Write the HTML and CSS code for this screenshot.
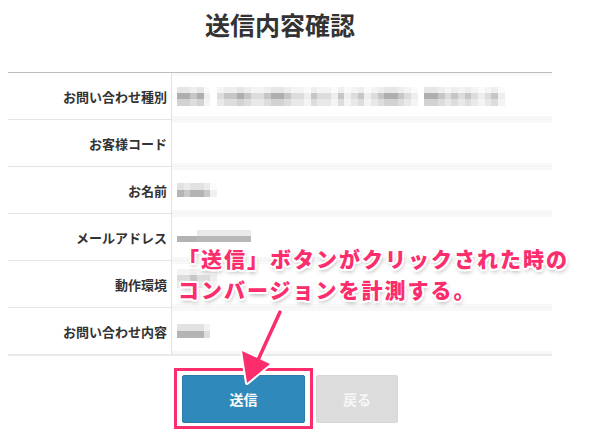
FILE: index.html
```html
<!DOCTYPE html>
<html lang="ja">
<head>
<meta charset="utf-8">
<title>送信内容確認</title>
<link rel="stylesheet" href="styles.css">
</head>
<body>
<div class="page">
  <h1 class="title">送信内容確認</h1>
  <div class="table">
    <div class="label">お問い合わせ種別</div>
    <div class="value">
      <span class="blur">
        <i class="a"></i><i class="a"></i><i class="b"></i><i class="a"></i><i class="d"></i><i class="e"></i>
        <i class="c"></i><i class="b"></i><i class="b"></i><i class="a"></i><i class="b"></i><i class="c"></i>
        <i class="c"></i><i class="b"></i><i class="a"></i><i class="a"></i><i class="b"></i><i class="c"></i>
        <i class="c"></i><i class="d"></i><i class="b"></i><i class="c"></i><i class="c"></i><i class="d"></i>
        <i class="b"></i><i class="d"></i><i class="c"></i><i class="b"></i><i class="d"></i><i class="c"></i>
        <i class="b"></i><i class="a"></i><i class="a"></i><i class="b"></i><i class="c"></i><i class="d"></i>
        <i class="e"></i><i class="a"></i><i class="a"></i><i class="b"></i><i class="c"></i><i class="b"></i>
        <i class="c"></i><i class="b"></i><i class="c"></i><i class="d"></i><i class="c"></i><i class="b"></i>
        <i class="d"></i>
      </span>
    </div>
    <div class="label">お客様コード</div>
    <div class="value"></div>
    <div class="label">お名前</div>
    <div class="value">
      <span class="blur short">
        <i class="a"></i><i class="b"></i><i class="a"></i><i class="a"></i><i class="b"></i><i class="d"></i>
      </span>
    </div>
    <div class="label">メールアドレス</div>
    <div class="value">
      <span class="blur mail">
        <i class="f"></i><i class="f"></i><i class="f"></i><i class="g"></i><i class="g"></i><i class="g"></i>
        <i class="g"></i><i class="g"></i><i class="g"></i><i class="g"></i><i class="g"></i>
      </span>
    </div>
    <div class="label">動作環境</div>
    <div class="value">
      <span class="blur env">
        <i class="c"></i><i class="c"></i><i class="b"></i><i class="c"></i><i class="c"></i><i class="d"></i>
      </span>
    </div>
    <div class="label last">お問い合わせ内容</div>
    <div class="value last">
      <span class="blur short">
        <i class="a"></i><i class="a"></i><i class="a"></i><i class="a"></i><i class="c"></i>
      </span>
    </div>
  </div>

  <div class="actions">
    <div class="highlight">
      <button class="btn btn-send" type="button">送信</button>
    </div>
    <button class="btn btn-back" type="button">戻る</button>
  </div>

  <p class="note">「送信」ボタンがクリックされた時の<br>コンバージョンを計測する。</p>

  <svg class="arrow" viewBox="236 305 56 85" width="56" height="85" aria-hidden="true">
    <path d="M280 312 L258 360" stroke="#ffffff" stroke-width="7" stroke-linecap="round" fill="none"/>
    <path d="M247 383 L242 351 L270 364 Z" fill="#ffffff" stroke="#ffffff" stroke-width="4" stroke-linejoin="round"/>
    <path d="M280 312 L258 360" stroke="#fc2d6d" stroke-width="3.5" stroke-linecap="round" fill="none"/>
    <path d="M247 383 L242 351 L270 364 Z" fill="#fc2d6d"/>
  </svg>
</div>
</body>
</html>
```

FILE: styles.css
```css
* {
  box-sizing: border-box;
}

html, body {
  margin: 0;
  padding: 0;
  background: #ffffff;
}

body {
  font-family: "Noto Sans CJK JP", "Noto Sans", sans-serif;
  color: #333333;
}

.page {
  position: relative;
  width: 544px;
  margin-left: 8px;
  height: 435px;
}

.title {
  margin: 0;
  padding-top: 12px;
  height: 72px;
  font-size: 25px;
  line-height: 25px;
  font-weight: 700;
  text-align: center;
  color: #333333;
  letter-spacing: 0;
}

.table {
  display: grid;
  grid-template-columns: 164px 1fr;
  border-top: 1px solid #bdbdbd;
  border-bottom: 2px solid #e9e9e9;
}

.label {
  height: 47px;
  border-bottom: 1px solid #e4e4e4;
  border-right: 1px solid #e2e2e2;
  padding-right: 4px;
  display: flex;
  align-items: center;
  justify-content: flex-end;
  font-size: 13px;
  font-weight: 700;
  color: #333333;
}

.value {
  height: 47px;
  border-bottom: 1px solid #f4f4f4;
  padding-left: 5px;
  display: flex;
  align-items: center;
  background: linear-gradient(to bottom, #f8f8f8 0 3px, transparent 3px calc(100% - 3px), #f8f8f8 calc(100% - 3px));
}

.label.last,
.value.last {
  height: 46px;
  border-bottom: none;
}

.blur {
  display: flex;
  height: 19px;
}

.blur i {
  display: block;
  width: 6.7px;
  height: 100%;
}

.blur .a { background: linear-gradient(to bottom, #e6e6e6 0 6px, #aeaeae 6px 12px, #d2d2d2 12px); }
.blur .b { background: linear-gradient(to bottom, #eeeeee 0 6px, #c6c6c6 6px 12px, #dddddd 12px); }
.blur .c { background: linear-gradient(to bottom, #f4f4f4 0 6px, #dcdcdc 6px 12px, #e9e9e9 12px); }
.blur .d { background: linear-gradient(to bottom, #fafafa 0 6px, #eeeeee 6px 12px, #f4f4f4 12px); }
.blur .e { background: transparent; }

.blur.short {
  height: 14px;
}

.blur.short .a { background: linear-gradient(to bottom, #e2e2e2 0 7px, #b4b4b4 7px); }
.blur.short .b { background: linear-gradient(to bottom, #ebebeb 0 7px, #c9c9c9 7px); }
.blur.short .c { background: linear-gradient(to bottom, #f2f2f2 0 7px, #dedede 7px); }
.blur.short .d { background: linear-gradient(to bottom, #fbfbfb 0 7px, #f0f0f0 7px); }

.blur.mail {
  height: 12px;
  align-self: flex-start;
  margin-top: 16px;
}

.blur.mail .f { background: linear-gradient(to bottom, #ffffff 0 6px, #b3b3b3 6px); }
.blur.mail .g { background: linear-gradient(to bottom, #eaeaea 0 6px, #b8b8b8 6px); }

.blur.env {
  align-self: flex-start;
  margin-top: 8px;
}

.actions {
  display: flex;
  align-items: flex-start;
  margin-top: 12px;
  padding-left: 166px;
}

.highlight {
  border: 3px solid #fc2d6d;
  padding: 4px 5px 3px 5px;
  background: #ffffff;
}

.btn {
  display: block;
  margin: 0;
  height: 48px;
  border-radius: 2px;
  font-family: "Noto Sans CJK JP", "Noto Sans", sans-serif;
  font-size: 14px;
  font-weight: 700;
  color: #ffffff;
  padding: 0;
}

.btn-send {
  width: 123px;
  background: #2f8abb;
  border: 1px solid #2a7dab;
}

.btn-back {
  width: 82px;
  margin-top: 7px;
  margin-left: 3px;
  background: #dcdcdc;
  border: 1px solid #d6d6d6;
  color: #f7f7f7;
}

.note {
  position: absolute;
  left: 170px;
  top: 243px;
  margin: 0;
  font-size: 21px;
  line-height: 31px;
  font-weight: 900;
  letter-spacing: 2px;
  color: #fc2d6d;
  white-space: nowrap;
  text-shadow:
    2px 0 0 #fff, -2px 0 0 #fff, 0 2px 0 #fff, 0 -2px 0 #fff,
    1.5px 1.5px 0 #fff, -1.5px 1.5px 0 #fff, 1.5px -1.5px 0 #fff, -1.5px -1.5px 0 #fff,
    1px 3px 4px rgba(0, 0, 0, 0.35);
}

.arrow {
  position: absolute;
  left: 228px;
  top: 305px;
  overflow: visible;
}
```
